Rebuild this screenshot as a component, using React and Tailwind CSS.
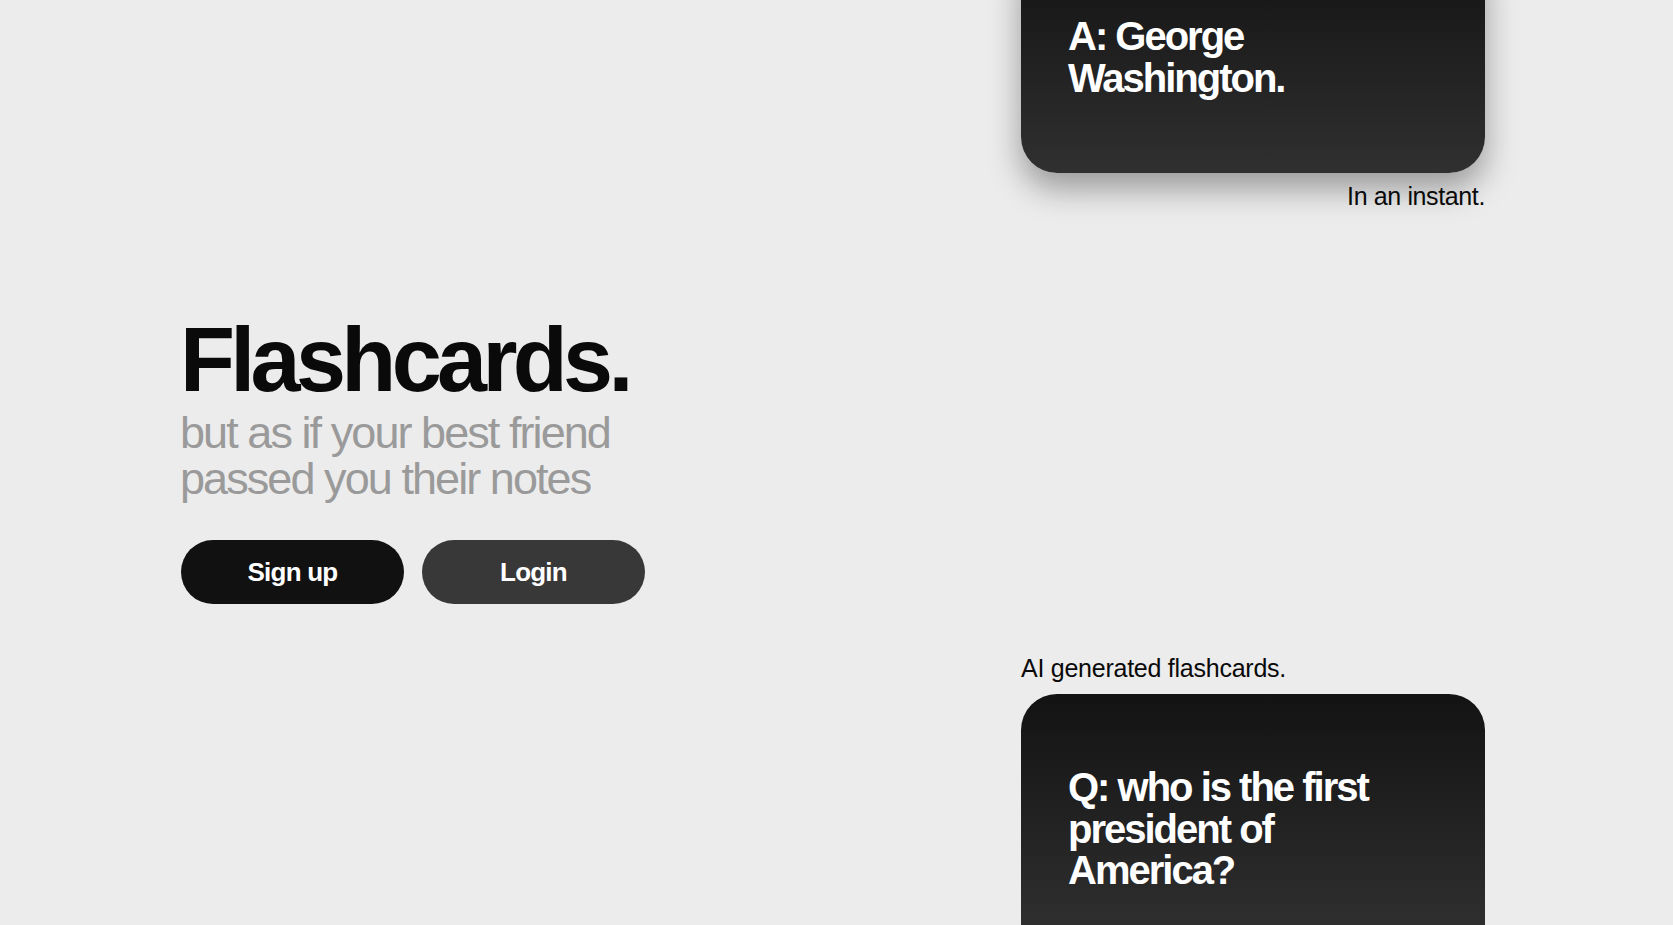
export default function App() {
  return (
    <div
      className="w-full h-[925px] overflow-hidden bg-[#ececec] flex"
      style={{ fontFamily: '"Liberation Sans", Arial, sans-serif' }}
    >
      <div className="w-[1021px] shrink-0 pl-[180px] pt-[315px]">
        <h1 className="text-[90px] leading-[90px] font-bold tracking-[-0.052em] text-[#0a0a0a]">
          Flashcards.
        </h1>
        <p className="mt-[5px] text-[45px] leading-[46px] tracking-[-0.043em] text-[#9a9a9a]">
          but as if your best friend
          <br />
          passed you their notes
        </p>
        <div className="mt-[38px] ml-px flex gap-[18px]">
          <button className="w-[223px] h-[64px] rounded-full bg-[#111111] text-white text-[26px] font-bold tracking-[-0.03em]">
            Sign up
          </button>
          <button className="w-[223px] h-[64px] rounded-full bg-[#383838] text-white text-[26px] font-bold tracking-[-0.03em]">
            Login
          </button>
        </div>
      </div>
      <div className="w-[464px] shrink-0 flex flex-col">
        <div className="mt-[-57px] rounded-[36px] bg-linear-to-b from-[#121212] to-[#303030] shadow-[0_16px_32px_rgba(0,0,0,0.35)] pl-[47px] pt-[73px] pb-[74px]">
          <p className="text-white text-[40px] leading-[41.5px] font-bold tracking-[-0.05em]">
            A: George
            <br />
            Washington.
          </p>
        </div>
        <p className="mt-[9px] text-right text-[25px] leading-[29px] text-[#0a0a0a] tracking-[-0.015em]">
          In an instant.
        </p>
        <p className="mt-[443px] text-[25px] leading-[29px] text-[#0a0a0a] tracking-[-0.01em]">
          AI generated flashcards.
        </p>
        <div className="mt-[11px] shrink-0 rounded-[36px] bg-linear-to-b from-[#131313] to-[#343434] pl-[47px] pt-[73px] pb-[74px]">
          <p className="text-white text-[40px] leading-[41.5px] font-bold tracking-[-0.05em]">
            Q: who is the first
            <br />
            president of
            <br />
            America?
          </p>
        </div>
      </div>
    </div>
  );
}
